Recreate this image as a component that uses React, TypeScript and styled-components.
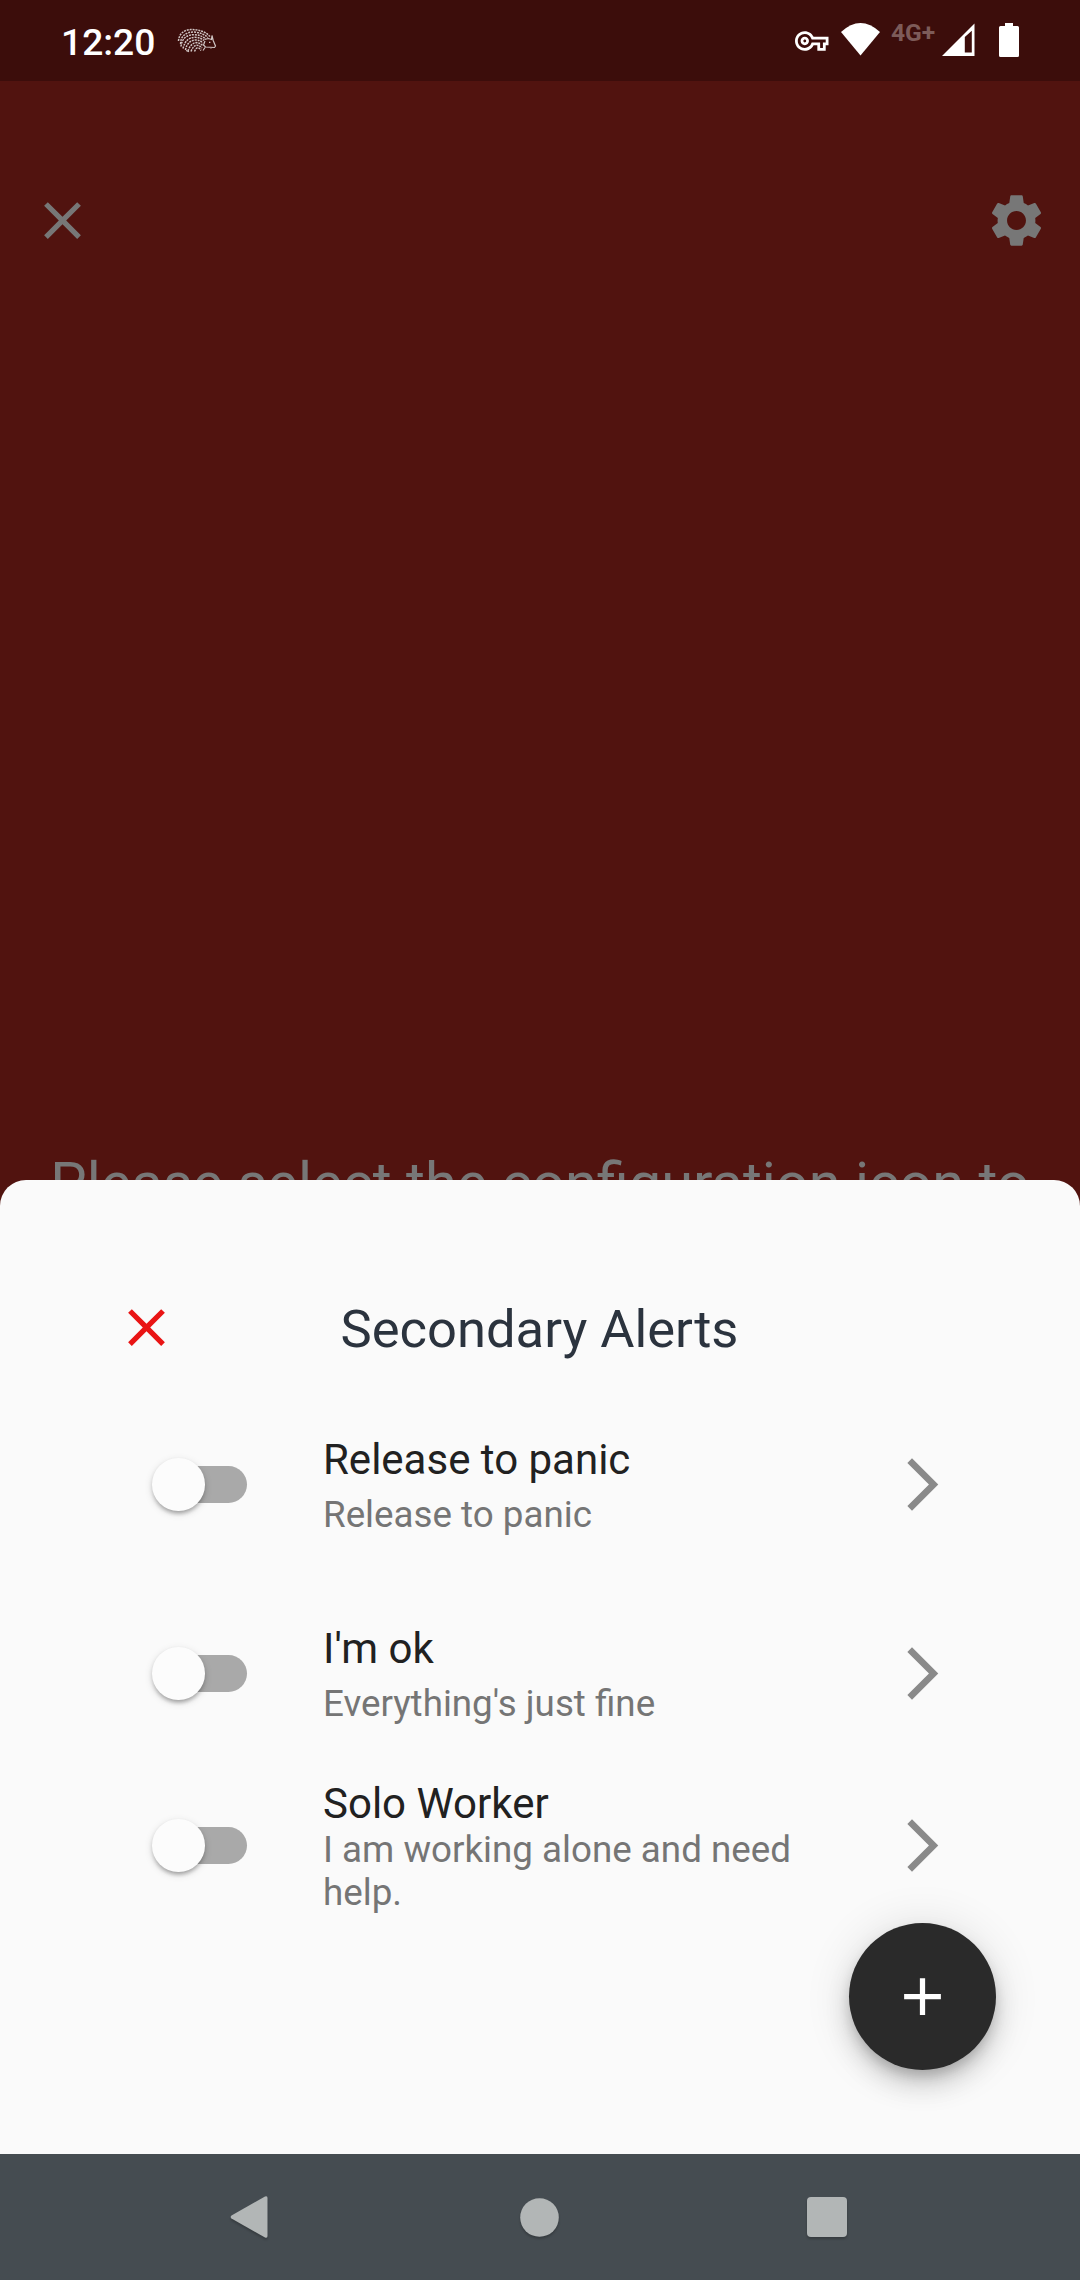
import React, { useState } from 'react';
import styled, { createGlobalStyle } from 'styled-components';

const GlobalStyle = createGlobalStyle`
  * { box-sizing: border-box; }
  body { margin: 0; background: #51130f; }
`;

const Screen = styled.div`
  display: flex;
  flex-direction: column;
  width: 1080px;
  height: 2280px;
  overflow: hidden;
  background: #51130f;
  font-family: Roboto, sans-serif;
`;

const StatusBar = styled.header`
  display: flex;
  align-items: flex-start;
  justify-content: space-between;
  height: 81px;
  padding: 0 61px;
  background: #3c0d0b;
  color: #fff;
`;

const StatusGroup = styled.div`
  display: flex;
  align-items: flex-start;
`;

const Clock = styled.span`
  margin: 20px 22px 0 0;
  font-size: 37.2px;
  font-weight: 500;
  line-height: 44px;
`;

const StatusIcon = styled.svg<{ $top: number; $gap?: number }>`
  display: block;
  flex: none;
  margin-top: ${(p) => p.$top}px;
  margin-right: ${(p) => p.$gap ?? 0}px;
`;

const NetworkType = styled.span`
  margin: 19px 6px 0 0;
  width: 45px;
  color: #7d5b59;
  font-size: 24.6px;
  font-weight: 700;
  line-height: 28px;
`;

const Backdrop = styled.main`
  display: flex;
  flex-direction: column;
  justify-content: space-between;
  height: 1099px;
  padding-top: 108px;
  color: #777;
`;

const Toolbar = styled.div`
  display: flex;
  justify-content: space-between;
  padding: 0 32px 0 31px;
`;

const IconButton = styled.button`
  display: block;
  width: 63px;
  height: 63px;
  padding: 0;
  border: 0;
  background: none;
  color: inherit;
`;

const Hint = styled.p`
  height: 31px;
  margin: 0;
  font-size: 57.75px;
  line-height: 68px;
  text-align: center;
  white-space: nowrap;
`;

const Sheet = styled.section`
  position: relative;
  flex: 1;
  padding-top: 116px;
  border-radius: 26px 26px 0 0;
  background: #fafafa;
`;

const SheetHeader = styled.div`
  display: grid;
  grid-template-columns: 63px 1fr 63px;
  height: 63px;
  margin-bottom: 31px;
  padding: 0 116px 0 115px;
  color: #e91414;
`;

const SheetTitle = styled.h1`
  margin: 2px 0 0;
  color: #2b333e;
  font-size: 52.5px;
  font-weight: 400;
  line-height: 62px;
  text-align: center;
`;

const AlertRow = styled.div<{ $dense?: boolean }>`
  display: flex;
  align-items: center;
  height: ${(p) => (p.$dense ? 155 : 189)}px;
  padding: 0 126px 0 152px;
  color: #8a8a8a;
`;

const AlertText = styled.div<{ $gap: number }>`
  display: flex;
  flex: 1;
  flex-direction: column;
  gap: ${(p) => p.$gap}px;
  margin: 0 48px 0 76.4px;
  padding-top: 2px;
`;

const AlertTitle = styled.div`
  color: #212121;
  font-size: 42px;
  line-height: 49px;
`;

const AlertDetail = styled.div`
  color: #757575;
  font-size: 36.75px;
  line-height: 43px;
`;

const SwitchTrack = styled.button<{ $on: boolean }>`
  display: flex;
  flex: none;
  align-items: center;
  justify-content: ${(p) => (p.$on ? 'flex-end' : 'flex-start')};
  width: 86.6px;
  height: 36.75px;
  margin-left: 8px;
  padding: 0;
  border: 0;
  border-radius: 19px;
  background: #a9a9a9;
`;

const SwitchThumb = styled.span<{ $on: boolean }>`
  flex: none;
  width: 52.5px;
  height: 52.5px;
  margin: 0 ${(p) => (p.$on ? '-8px' : '0')} 0 ${(p) => (p.$on ? '0' : '-8px')};
  border-radius: 50%;
  background: #fcfcfc;
  box-shadow: 0 5px 4px -3px rgba(0, 0, 0, 0.2), 0 2.6px 4px rgba(0, 0, 0, 0.14),
    0 2.6px 8px rgba(0, 0, 0, 0.12);
`;

const AddButton = styled.button`
  position: absolute;
  right: 84px;
  bottom: 84px;
  display: grid;
  place-items: center;
  width: 147px;
  height: 147px;
  padding: 0;
  border: 0;
  border-radius: 50%;
  background: #2a2a2a;
  color: #fff;
  box-shadow: 0 8px 13px -2.6px rgba(0, 0, 0, 0.2), 0 16px 26px rgba(0, 0, 0, 0.14),
    0 2.6px 47px rgba(0, 0, 0, 0.12);
`;

const NavBar = styled.nav`
  display: flex;
  align-items: center;
  justify-content: space-between;
  height: 126px;
  padding: 0 233px 0 230px;
  background: #454c51;
`;

const NavIcon = styled.svg`
  display: block;
  overflow: visible;
  filter: drop-shadow(0 2px 1px rgba(0, 0, 0, 0.22));
`;

const Glyph = ({ d }: { d: string }) => (
  <svg width="63" height="63" viewBox="0 0 24 24" fill="currentColor" display="block">
    <path d={d} />
  </svg>
);

const CLOSE =
  'M19 6.41L17.59 5 12 10.59 6.41 5 5 6.41 10.59 12 5 17.59 6.41 19 12 13.41 17.59 19 19 17.59 13.41 12z';
const SETTINGS =
  'M19.14 12.94c.04-.3.06-.61.06-.94 0-.32-.02-.64-.07-.94l2.03-1.58c.18-.14.23-.41.12-.61l-1.92-3.32c-.12-.22-.37-.29-.59-.22l-2.39.96c-.5-.38-1.03-.7-1.62-.94l-.36-2.54c-.04-.24-.24-.41-.48-.41h-3.84c-.24 0-.43.17-.47.41l-.36 2.54c-.59.24-1.13.57-1.62.94l-2.39-.96c-.22-.08-.47 0-.59.22L2.74 8.87c-.12.21-.08.47.12.61l2.03 1.58c-.05.3-.09.63-.09.94s.02.64.07.94l-2.03 1.58c-.18.14-.23.41-.12.61l1.92 3.32c.12.22.37.29.59.22l2.39-.96c.5.38 1.03.7 1.62.94l.36 2.54c.05.24.24.41.48.41h3.84c.24 0 .44-.17.47-.41l.36-2.54c.59-.24 1.13-.56 1.62-.94l2.39.96c.22.08.47 0 .59-.22l1.92-3.32c.12-.22.07-.47-.12-.61l-2.01-1.58zM12 15.6c-1.98 0-3.6-1.62-3.6-3.6s1.62-3.6 3.6-3.6 3.6 1.62 3.6 3.6-1.62 3.6-3.6 3.6z';
const CHEVRON = 'M6.23 20.23L8 22l10-10L8 2 6.23 3.77 14.46 12z';
const PLUS = 'M19 13h-6v6h-2v-6H5v-2h6V5h2v6h6v2z';
const KEY =
  'M22 19h-6v-4h-2.68c-1.14 2.42-3.6 4-6.32 4-3.86 0-7-3.14-7-7s3.14-7 7-7c2.72 0 5.17 1.58 6.32 4H24v6h-2v4zm-4-2h2v-4h2v-2H11.94l-.23-.67C11.01 8.34 9.11 7 7 7c-2.76 0-5 2.24-5 5s2.24 5 5 5c2.11 0 4.01-1.34 4.71-3.33l.23-.67H18v4zM7 15c-1.65 0-3-1.35-3-3s1.35-3 3-3 3 1.35 3 3-1.35 3-3 3zm0-4c-.55 0-1 .45-1 1s.45 1 1 1 1-.45 1-1-.45-1-1-1z';

const Hedgehog = () => (
  <StatusIcon $top={28} width="40" height="25" viewBox="0 0 40 25" fill="none" stroke="#d0c5c4">
    <path
      strokeWidth="1.5"
      strokeDasharray="2 .9"
      d="M1.500 13C2 5 8 1.500 14 1.600 22 1.300 29 4 33 8.500M3.600 16C3.500 8 9 4.100 16 4.100 22 4.100 27 6 31 9.500M4 18.500C5 10 10 6.700 17 6.700 22 6.800 25.500 8.300 29 11M6 20.500C8 12.500 12 9.400 18 9.300 22 9.300 25 10.600 27 12.500M8.500 22C9.500 15.500 14 12 18.500 12 22 12 24 13 26 15M11 23C12.500 18 16 14.700 19 14.600 22 14.700 23.500 15.800 26 17.500M14 23.500C15.500 19.500 17.500 17.200 20 17.200 22 17.400 23.500 18.200 25 20M17.500 23.500C18.500 21 19.500 19.800 21 19.800 22.500 20 23 21 24 22.500"
    />
    <path
      strokeWidth="1.2"
      d="M27.500 11.500l4-1 3 1 .5-4 1.200 5 2.300 5.500-1 1.500-9-.5-2-2 1.500-4M32 14.300h1.400M28 19.500l-2 3M9 22.500l3 1.300M34.500 19.500l-1 .8"
    />
  </StatusIcon>
);

interface Alert {
  title: string;
  detail: string;
  dense?: boolean;
}

const ALERTS: Alert[] = [
  { title: 'Release to panic', detail: 'Release to panic' },
  { title: "I'm ok", detail: "Everything's just fine" },
  { title: 'Solo Worker', detail: 'I am working alone and need help.', dense: true },
];

function AlertItem({ title, detail, dense }: Alert) {
  const [on, setOn] = useState(false);
  return (
    <AlertRow $dense={dense}>
      <SwitchTrack $on={on} role="switch" aria-checked={on} onClick={() => setOn(!on)}>
        <SwitchThumb $on={on} />
      </SwitchTrack>
      <AlertText $gap={dense ? 0.6 : 9}>
        <AlertTitle>{title}</AlertTitle>
        <AlertDetail>{detail}</AlertDetail>
      </AlertText>
      <Glyph d={CHEVRON} />
    </AlertRow>
  );
}

export default function App() {
  return (
    <Screen>
      <GlobalStyle />
      <StatusBar>
        <StatusGroup>
          <Clock>12:20</Clock>
          <Hedgehog />
        </StatusGroup>
        <StatusGroup>
          <StatusIcon $top={31} $gap={12.5} width="33.5" height="20" viewBox="0 5 24 14" fill="#fff">
            <path d={KEY} />
          </StatusIcon>
          <StatusIcon $top={23} $gap={11} width="39" height="33" viewBox="0 0 39 33" fill="#fff">
            <path d="M0 9Q19.500-9 39 9L19.500 32.500z" />
          </StatusIcon>
          <NetworkType>4G+</NetworkType>
          <StatusIcon $top={23} $gap={24} width="33" height="33" viewBox="0 0 33 33" fill="#fff">
            <path fillRule="evenodd" d="M32.500.5V33H0zM22.800 14V29.500H29.800V7.700z" />
          </StatusIcon>
          <StatusIcon $top={23} width="20" height="34" viewBox="0 0 20 34" fill="#fff">
            <path d="M6 0h8v3h4.500q1.500 0 1.500 1.500v28q0 1.500-1.500 1.500h-17Q0 34 0 32.500v-28Q0 3 1.500 3H6z" />
          </StatusIcon>
        </StatusGroup>
      </StatusBar>
      <Backdrop>
        <Toolbar>
          <IconButton aria-label="Close">
            <Glyph d={CLOSE} />
          </IconButton>
          <IconButton aria-label="Settings">
            <Glyph d={SETTINGS} />
          </IconButton>
        </Toolbar>
        <Hint>Please select the configuration icon to</Hint>
      </Backdrop>
      <Sheet>
        <SheetHeader>
          <IconButton aria-label="Dismiss">
            <Glyph d={CLOSE} />
          </IconButton>
          <SheetTitle>Secondary Alerts</SheetTitle>
        </SheetHeader>
        {ALERTS.map((alert) => (
          <AlertItem key={alert.title} {...alert} />
        ))}
        <AddButton aria-label="Add">
          <Glyph d={PLUS} />
        </AddButton>
      </Sheet>
      <NavBar>
        <NavIcon width="42" height="44" viewBox="0 0 42 44" fill="#b2b6b6">
          <path d="M1.500 20.500L35 1.500Q37.500.5 37.500 3V41Q37.500 43.500 35 42.500L1.500 23.500Q-.2 22 1.500 20.500z" />
        </NavIcon>
        <NavIcon width="39" height="39" viewBox="0 0 39 39" fill="#b2b6b6">
          <circle cx="19.5" cy="19.5" r="19.3" />
        </NavIcon>
        <NavIcon width="40" height="40" viewBox="0 0 40 40" fill="#b2b6b6">
          <rect width="40" height="40" rx="4" />
        </NavIcon>
      </NavBar>
    </Screen>
  );
}
